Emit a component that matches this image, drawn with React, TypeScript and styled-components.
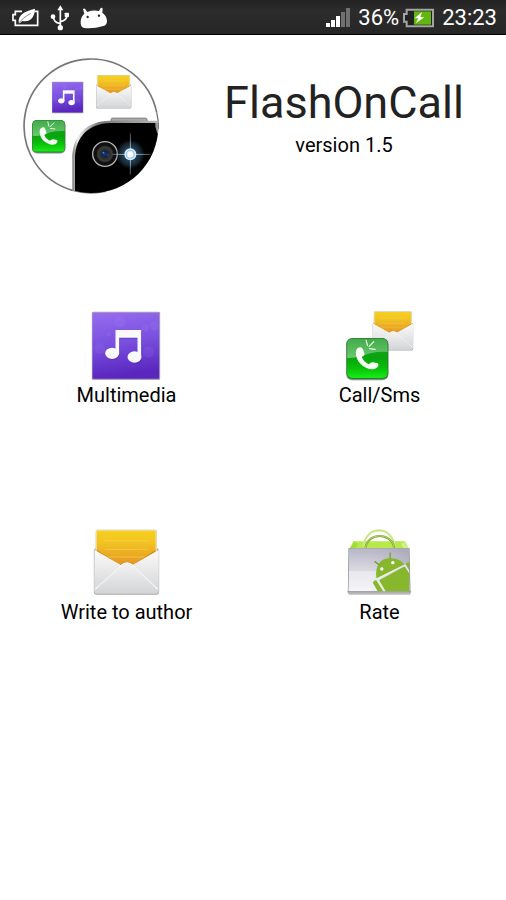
import React, { useId } from "react";
import styled, { createGlobalStyle } from "styled-components";

const GlobalStyle = createGlobalStyle`
  * { box-sizing: border-box; }
  html { background: #fff; }
  body {
    margin: 0;
    background: #fff;
    color: #000;
    font-family: Roboto, "Noto Sans", sans-serif;
  }
`;

const Screen = styled.div`
  min-height: 100vh;
  display: flex;
  flex-direction: column;
`;

const StatusBar = styled.div`
  display: flex;
  align-items: center;
  justify-content: space-between;
  height: 35px;
  padding: 2px 9px 0 12px;
  background: linear-gradient(#222, #2c2c2c 30%, #262626);
  border-bottom: 1px solid #000;
  color: #fff;
  font-size: 22px;
  line-height: 26px;
`;

const StatusGroup = styled.div<{ $gap: number }>`
  display: flex;
  align-items: center;
  gap: ${(p) => p.$gap}px;
`;

const Power = styled.span`
  display: flex;
  align-items: center;
  gap: 4px;
`;

const Header = styled.header`
  display: flex;
  align-items: flex-start;
  gap: 20px;
  padding: 21px 0 0 22px;
`;

const Heading = styled.div`
  flex: 1;
  padding-top: 20px;
  text-align: center;
`;

const Title = styled.h1`
  margin: 0;
  color: #222;
  font-size: 45px;
  line-height: 54px;
  font-weight: 400;
`;

const Version = styled.p`
  margin: 2px 0 0;
  font-size: 20px;
  line-height: 26px;
`;

const Menu = styled.nav`
  display: grid;
  grid-template-columns: 1fr 1fr;
  row-gap: 119px;
  padding-top: 115px;
`;

const MenuButton = styled.button`
  justify-self: center;
  display: flex;
  flex-direction: column;
  align-items: center;
  padding: 0;
  border: 0;
  background: none;
  color: #000;
  font: inherit;
  font-size: 20px;
  line-height: 28px;
  cursor: pointer;
`;

const Drawing = styled.svg`
  display: block;
  flex: none;
`;

function EnvelopeArt() {
  const id = useId();
  return (
    <g>
      <defs>
        <linearGradient id={id + "y"} x1="0" y1="0" x2="0" y2="1">
          <stop offset="0" stopColor="#f5d01c" />
          <stop offset="0.3" stopColor="#f3c522" />
          <stop offset="1" stopColor="#e49424" />
        </linearGradient>
        <linearGradient id={id + "w"} x1="0" y1="0" x2="0" y2="1">
          <stop offset="0" stopColor="#fafafa" />
          <stop offset="1" stopColor="#d3d4d6" />
        </linearGradient>
        <linearGradient id={id + "f"} x1="0" y1="0" x2="0" y2="1">
          <stop offset="0" stopColor="#f3f3f4" />
          <stop offset="1" stopColor="#d4d5d7" />
        </linearGradient>
      </defs>
      <path d="M130 92 Q130 86 136 84 V34 Q136 29 141 29 H314 Q319 29 319 34 V84 Q326 87 326 92 V215 Q326 224 317 224 H139 Q130 224 130 215 Z" fill="#a9a9aa" />
      <rect x="135" y="30" width="184" height="108" rx="5" fill="#f2dfa8" />
      <rect x="139" y="32" width="176" height="106" rx="3" fill={`url(#${id}y)`} />
      <path d="M163 62 H291 M163 88 H291 M163 111 H291" stroke="#f6d868" strokeOpacity=".65" strokeWidth="2.5" />
      <path d="M138 92 L208 135 Q228 123 250 135 L316 92" fill="none" stroke="#ae6b17" strokeOpacity=".5" strokeWidth="4" />
      <path d="M132 91 L209 135 Q228 145 248 135 L325 91 V212 Q325 221 316 221 H140 Q131 221 131 212 Z" fill={`url(#${id}w)`} />
      <path d="M134 208 L211 136 Q229 121 248 136 L323 208 Q323 219 314 219 H141 Q134 219 134 208 Z" fill={`url(#${id}f)`} />
      <path d="M135 207 L211 136 Q229 121 248 136 L321 207" fill="none" stroke="#fff" strokeWidth="3.5" />
      <path d="M139 203 L212 133 M247 133 L317 203" stroke="#bfc0c2" strokeWidth="1" />
      <path d="M132 91 L209 135 M248 135 L325 91" stroke="#fff" strokeWidth="2" />
    </g>
  );
}

function MusicArt() {
  const id = useId();
  return (
    <g>
      <defs>
        <linearGradient id={id + "p"} x1="0" y1="0" x2="0.15" y2="1">
          <stop offset="0" stopColor="#976cef" />
          <stop offset="0.5" stopColor="#7950df" />
          <stop offset="1" stopColor="#5a26bd" />
        </linearGradient>
      </defs>
      <rect x="67" y="35" width="205" height="205" rx="4" fill="#aaa2b8" />
      <rect x="69" y="38" width="200" height="198" rx="1" fill={`url(#${id}p)`} />
      <g fill="#c3a0ff" fillOpacity=".1">
        <circle cx="151" cy="66" r="17" />
        <circle cx="91" cy="146" r="16" />
        <circle cx="237" cy="156" r="17" />
        <circle cx="228" cy="84" r="11" />
        <circle cx="117" cy="103" r="6" />
        <circle cx="255" cy="78" r="14" />
      </g>
      <g transform="translate(2 3)" fill="#4a269e" fillOpacity=".45">
        <path d="M138 90 H215 V171 H204 V113 H149 V160 H138 Z" />
        <ellipse cx="128" cy="160" rx="21" ry="17" />
        <ellipse cx="195" cy="171" rx="21" ry="17" />
      </g>
      <g fill="#f9f8fc">
        <path d="M138 90 H215 V171 H204 V113 H149 V160 H138 Z" />
        <ellipse cx="128" cy="160" rx="21" ry="17" />
        <ellipse cx="195" cy="171" rx="21" ry="17" />
      </g>
    </g>
  );
}

function PhoneArt() {
  const id = useId();
  return (
    <g>
      <defs>
        <linearGradient id={id + "g"} x1="0" y1="0" x2="0" y2="1">
          <stop offset="0" stopColor="#219b2c" />
          <stop offset="0.5" stopColor="#08a50e" />
          <stop offset="0.75" stopColor="#09c009" />
          <stop offset="1" stopColor="#17ed17" />
        </linearGradient>
        <linearGradient id={id + "s"} x1="0" y1="0" x2="0" y2="1">
          <stop offset="0" stopColor="#fff" stopOpacity=".15" />
          <stop offset="1" stopColor="#fff" stopOpacity=".4" />
        </linearGradient>
      </defs>
      <rect x="62" y="115" width="127" height="126" rx="18" fill="#39443a" fillOpacity=".6" />
      <rect x="63" y="114" width="125" height="123" rx="17" fill="#247f2a" />
      <rect x="65" y="116" width="121" height="118" rx="15" fill={`url(#${id}g)`} />
      <path d="M65 174 V131 Q65 116 80 116 H171 Q186 116 186 131 V156 Q144 153 117 166 Q93 176 65 174 Z" fill={`url(#${id}s)`} />
      <path d="M96 145 Q107 137 112 147 L117 161 Q118 166 109 171 Q115 187 130 193 Q137 186 142 187 L157 190 Q160 193 158 199 Q151 209 138 208 C114 206 90 184 91 157 Q91 149 96 145 Z" fill="#f6fff4" />
      <path d="M126 137 L122 121 M131 139 L145 125 M132 146 L149 148" stroke="#edffeb" strokeWidth="3.5" strokeLinecap="round" />
    </g>
  );
}

function MultimediaIcon() {
  return <Drawing width="70" height="70" viewBox="64.5 33 210 210" aria-hidden="true"><MusicArt /></Drawing>;
}

function CallIcon() {
  return (
    <Drawing width="70" height="70" viewBox="58.5 33 210 210" aria-hidden="true">
      <g transform="translate(61 17) scale(.62 .6)"><EnvelopeArt /></g>
      <PhoneArt />
    </Drawing>
  );
}

function MailIcon() {
  return <Drawing width="70" height="70" viewBox="124.5 24 210 210" aria-hidden="true"><EnvelopeArt /></Drawing>;
}

function RateIcon() {
  return (
    <Drawing width="70" height="70" viewBox="58.5 24 210 210" aria-hidden="true">
      <defs>
        <linearGradient id="bagFront" x1="0" y1="0" x2="0" y2="1">
          <stop offset="0" stopColor="#b7b6c5" />
          <stop offset="0.53" stopColor="#dcdbe3" />
          <stop offset="0.54" stopColor="#e8e8ed" />
          <stop offset="1" stopColor="#f5f5f7" />
        </linearGradient>
        <linearGradient id="bagShade" x1="0" y1="0" x2="1" y2="0">
          <stop offset="0.35" stopColor="#aaa9b5" stopOpacity="0" />
          <stop offset="1" stopColor="#9998a6" stopOpacity=".45" />
        </linearGradient>
        <clipPath id="bagClip"><path d="M71 84 H251 V214 H71 Z" /></clipPath>
      </defs>
      <path d="M65 214 H258 L254 224 H70 Z" fill="#777" fillOpacity=".5" />
      <path d="M84 64 H239 L250 86 H72 Z" fill="#b8e84a" />
      <path d="M84 64 L98 73 L90 85 H72 L82 73 Z" fill="#a2dc37" />
      <path d="M239 64 L227 73 L234 85 H250 L241 75 Z" fill="#d2f18a" />
      <path d="M114 80 C119 15 202 15 207 80" fill="none" stroke="#d6ee9b" strokeWidth="7" />
      <path d="M114 80 C119 15 202 15 207 80" fill="none" stroke="#b6d86a" strokeWidth="2" />
      <path d="M69 84 H252 L255 217 H67 Z" fill="#8a8992" />
      <path d="M71 85 H250 L252 214 H69 Z" fill="url(#bagFront)" />
      <path d="M71 85 H250 L252 214 H69 Z" fill="url(#bagShade)" />
      <path d="M120 83 C127 36 198 36 206 83" fill="none" stroke="#7a9e3a" strokeWidth="6" />
      <path d="M120 83 C127 36 198 36 206 83" fill="none" stroke="#b4dc62" strokeWidth="3" />
      <g clipPath="url(#bagClip)" fill="#87b72d">
        <path d="M153 176 C146 134 169 112 196 115 C215 114 230 124 236 133 Z" />
        <path d="M161 181 L240 138 L254 164 V218 H183 Z" />
        <path d="M142 188 Q145 177 156 182 L179 218 H159 Z" />
        <path d="M241 132 Q245 123 253 129 V153 Z" />
        <path d="M151 178 L240 135 M155 181 L181 222 M239 137 L256 164" fill="none" stroke="#eef3e2" strokeWidth="4" />
      </g>
      <path d="M161 134 L148 125 M194 116 V99" stroke="#7a9e3a" strokeWidth="4" strokeLinecap="round" />
      <circle cx="169" cy="147" r="5" fill="#fff" />
      <circle cx="202" cy="128" r="5" fill="#fff" />
    </Drawing>
  );
}

function AppLogo() {
  return (
    <Drawing width="140" height="140" viewBox="18 18 420 420" role="img" aria-label="FlashOnCall logo">
      <defs>
        <clipPath id="logoDisc"><circle cx="226" cy="228" r="201" /></clipPath>
        <radialGradient id="flashGlow">
          <stop offset="0" stopColor="#9bd6ff" stopOpacity=".9" />
          <stop offset="0.4" stopColor="#4d7b9b" stopOpacity=".55" />
          <stop offset="0.75" stopColor="#28455c" stopOpacity=".5" />
          <stop offset="1" stopColor="#102638" stopOpacity="0" />
        </radialGradient>
        <radialGradient id="lensFill">
          <stop offset="0" stopColor="#0a3f92" />
          <stop offset="0.3" stopColor="#112544" />
          <stop offset="0.45" stopColor="#282829" />
          <stop offset="0.8" stopColor="#3c3c3d" />
          <stop offset="1" stopColor="#171717" />
        </radialGradient>
        <linearGradient id="phoneEdge" x1="0" y1="0" x2="1" y2="0">
          <stop offset="0" stopColor="#777" />
          <stop offset="0.06" stopColor="#eee" />
          <stop offset="0.3" stopColor="#777" />
          <stop offset="1" stopColor="#bbb" />
        </linearGradient>
      </defs>
      <circle cx="226" cy="228" r="201" fill="#fff" />
      <path d="M169 421 A201 201 0 1 1 422 187" fill="none" stroke="#777" strokeWidth="5" />
      <path d="M169 421 A201 201 0 0 0 270 424 M422 187 Q428 210 427 236" fill="none" stroke="#777" strokeWidth="4" />
      <g clipPath="url(#logoDisc)">
        <path d="M285 214 V208 Q285 204 291 204 H389 Q394 204 394 214 Z" fill="#aaa" stroke="#666" strokeWidth="2" />
        <path d="M169 438 V315 C174 251 215 214 280 212 H438 V438 Z" fill="url(#phoneEdge)" />
        <path d="M177 438 V320 C179 260 219 221 281 219 H438 V438 Z" fill="#000" />
        <path d="M418 219 H438 V270 Q423 255 418 229 Z" fill="#999" />
        <circle cx="267" cy="312" r="37" fill="#101010" stroke="#b9b4b0" strokeWidth="4" />
        <circle cx="267" cy="312" r="26" fill="url(#lensFill)" />
        <circle cx="262" cy="308" r="3" fill="#347eff" />
        <circle cx="276" cy="315" r="3" fill="#164b9e" />
        <circle cx="343" cy="313" r="45" fill="url(#flashGlow)" />
        <path d="M343 250 L344 312 L404 313 L344 314 L343 374 L342 314 L289 313 L342 312 Z" fill="#bce8ff" stroke="#bce8ff" strokeOpacity=".6" strokeWidth="1" />
        <circle cx="343" cy="313" r="18" fill="#d4efff" />
        <circle cx="343" cy="313" r="12" fill="none" stroke="#7aaed0" strokeWidth="2" />
        <circle cx="343" cy="313" r="8" fill="#fff" />
      </g>
      <g transform="translate(77 79) scale(.46)"><MusicArt /></g>
      <g transform="translate(170 61) scale(.54 .51)"><EnvelopeArt /></g>
      <g transform="translate(-1 120) scale(.79)"><PhoneArt /></g>
    </Drawing>
  );
}

function SaverIcon() {
  return (
    <Drawing width="28" height="20" viewBox="0 0 84 60" aria-label="Power saver" role="img">
      <path d="M30 10 H10 V20 H3 V37 H10 V52 H77 V10 H67" fill="none" stroke="#fff" strokeWidth="5" />
      <path d="M20 44 C18 20 37 10 69 2 C68 24 58 44 31 39 L23 46 Z" fill="#fff" />
      <path d="M18 47 Q32 29 56 16" fill="none" stroke="#555" strokeWidth="2" />
    </Drawing>
  );
}

function UsbIcon() {
  return (
    <Drawing width="20" height="26" viewBox="0 0 60 78" aria-label="USB connected" role="img">
      <path d="M31 10 V66 M31 56 Q10 51 10 35 M31 50 Q51 46 51 30" fill="none" stroke="#fff" strokeWidth="5" />
      <path d="M31 1 L40 16 H22 Z" fill="#fff" />
      <circle cx="9" cy="35" r="7" fill="#fff" />
      <rect x="44" y="23" width="13" height="13" rx="2" fill="#fff" />
      <circle cx="31" cy="68" r="8" fill="#fff" />
    </Drawing>
  );
}

function DroidIcon() {
  return (
    <Drawing width="28" height="22" viewBox="0 0 84 66" aria-label="Debugging" role="img">
      <path d="M9 6 Q13 2 16 7 L22 15 Q40 8 57 12 L62 3 Q67 0 68 6 L67 17 Q80 26 81 41 Q81 54 70 57 Q40 66 12 63 Q1 60 2 45 Q2 30 13 20 Z" fill="#fff" />
      <circle cx="23" cy="30" r="3.5" fill="#222" />
      <circle cx="57" cy="26" r="3.5" fill="#222" />
    </Drawing>
  );
}

function SignalIcon() {
  return (
    <Drawing width="24" height="20" viewBox="0 0 24 20" aria-label="Signal strength" role="img">
      <path d="M0 15 H4 V19 H0 Z M5 12 H9 V19 H5 Z M10 8 H14 V19 H10 Z" fill="#fff" />
      <path d="M15 4 H19 V19 H15 Z M20 0 H24 V19 H20 Z" fill="#707070" />
    </Drawing>
  );
}

function BatteryIcon() {
  return (
    <Drawing width="31" height="20" viewBox="0 0 93 60" aria-label="Charging" role="img">
      <path d="M11 5 H90 V55 H11 V41 H3 V18 H11 Z" fill="#222" stroke="#a4a4a4" strokeWidth="6" />
      <path d="M33 10 H84 V50 H33 Z" fill="#61b70d" />
      <path d="M57 12 L35 31 H46 L38 46 L64 28 H52 Z" fill="#fff" />
    </Drawing>
  );
}

const items = [
  { label: "Multimedia", Icon: MultimediaIcon },
  { label: "Call/Sms", Icon: CallIcon },
  { label: "Write to author", Icon: MailIcon },
  { label: "Rate", Icon: RateIcon },
];

export default function App() {
  return (
    <>
      <GlobalStyle />
      <Screen>
        <StatusBar>
          <StatusGroup $gap={10}>
            <SaverIcon />
            <UsbIcon />
            <DroidIcon />
          </StatusGroup>
          <StatusGroup $gap={8}>
            <SignalIcon />
            <Power>
              <span>36%</span>
              <BatteryIcon />
            </Power>
            <span>23:23</span>
          </StatusGroup>
        </StatusBar>
        <Header>
          <AppLogo />
          <Heading>
            <Title>FlashOnCall</Title>
            <Version>version 1.5</Version>
          </Heading>
        </Header>
        <Menu>
          {items.map(({ label, Icon }) => (
            <MenuButton key={label} type="button">
              <Icon />
              {label}
            </MenuButton>
          ))}
        </Menu>
      </Screen>
    </>
  );
}
